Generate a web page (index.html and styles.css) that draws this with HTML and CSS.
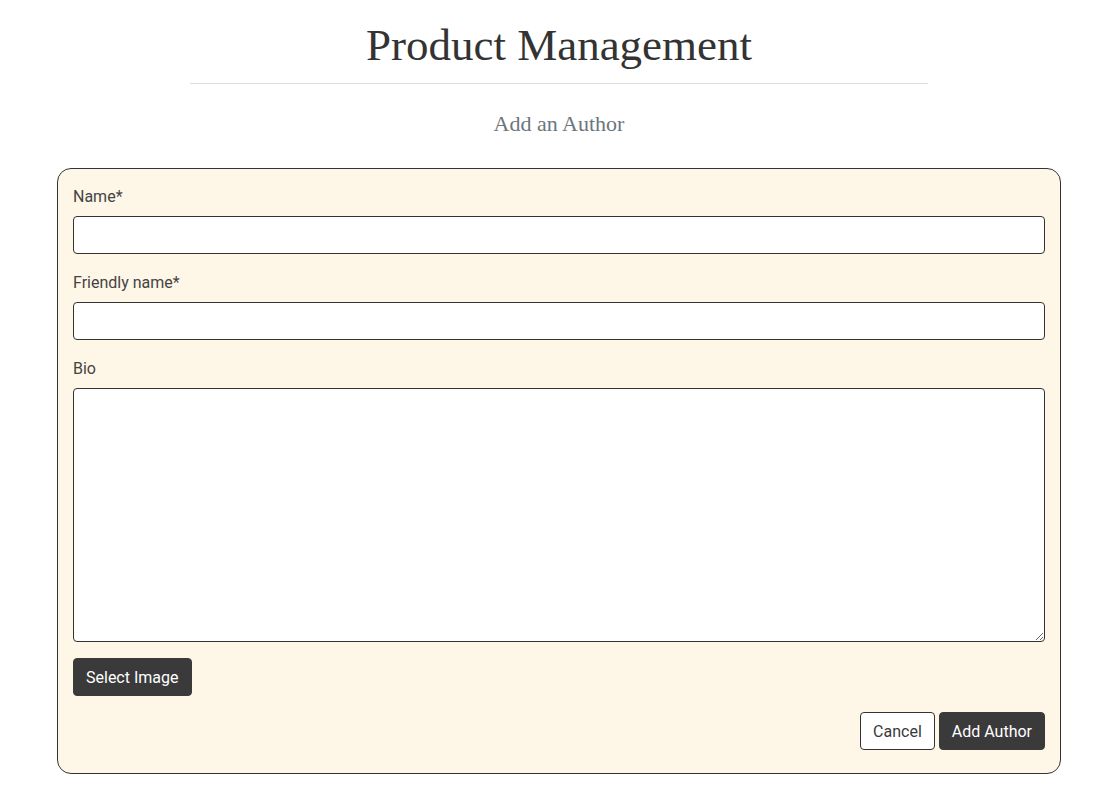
FILE: index.html
```html
<!DOCTYPE html>
<html>
<head>
<meta charset="utf-8">
<title>Product Management</title>
<link rel="stylesheet" href="styles.css">
</head>
<body>
<header class="page-head">
  <h1 class="title">Product Management</h1>
  <hr class="divider">
  <h2 class="subtitle">Add an Author</h2>
</header>
<form class="card">
  <label class="label" for="name">Name*</label>
  <input class="field" id="name" type="text">
  <label class="label" for="friendly">Friendly name*</label>
  <input class="field" id="friendly" type="text">
  <label class="label" for="bio">Bio</label>
  <textarea class="field area" id="bio"></textarea>
  <div class="img-row">
    <button type="button" class="btn btn-dark">Select Image</button>
  </div>
  <div class="actions">
    <button type="button" class="btn btn-light">Cancel</button>
    <button type="submit" class="btn btn-dark">Add Author</button>
  </div>
</form>
</body>
</html>
```

FILE: styles.css
```css
* { box-sizing: border-box; }
html, body { margin: 0; padding: 0; background: #fff; }
body {
  font-family: Roboto, "Liberation Sans", sans-serif;
  color: #3a3a3a;
}
.page-head {
  display: flex;
  flex-direction: column;
  align-items: center;
  padding-top: 19px;
  padding-left: 20px;
}
.title {
  margin: 0;
  font-family: "Liberation Serif", "DejaVu Serif", serif;
  font-weight: 400;
  font-size: 45px;
  line-height: 52px;
  color: #333;
}
.divider {
  width: 738px;
  margin: 12px 0 0;
  border: 0;
  border-top: 1px solid #dedede;
}
.subtitle {
  margin: 26px 0 0;
  font-family: "Liberation Serif", "DejaVu Serif", serif;
  font-weight: 400;
  font-size: 22px;
  line-height: 28px;
  color: #6c757d;
}
.card {
  display: flex;
  flex-direction: column;
  margin: 30px 37px 0 57px;
  padding: 15px 15px 23px 15px;
  background: #fef6e7;
  border: 1px solid #333;
  border-radius: 14px;
}
.label {
  font-size: 16px;
  line-height: 24px;
  color: #444;
  padding-top: 1px;
  margin-bottom: 7px;
}
.field {
  display: block;
  width: 100%;
  height: 38px;
  margin: 0 0 16px;
  border: 1px solid #333;
  border-radius: 4px;
  background: #fff;
  font: inherit;
}
.area {
  height: 254px;
  resize: vertical;
}
.img-row {
  display: flex;
}
.btn {
  font-family: Roboto, "Liberation Sans", sans-serif;
  font-size: 16px;
  line-height: 24px;
  height: 38px;
  padding: 7px 12px 5px;
  border-radius: 4px;
  cursor: pointer;
}
.btn-dark {
  background: #3a3a3a;
  color: #fff;
  border: 1px solid #3a3a3a;
}
.btn-light {
  background: #fff;
  color: #3a3a3a;
  border: 1px solid #333;
}
.actions {
  display: flex;
  justify-content: flex-end;
  gap: 4px;
  margin-top: 16px;
}
```
